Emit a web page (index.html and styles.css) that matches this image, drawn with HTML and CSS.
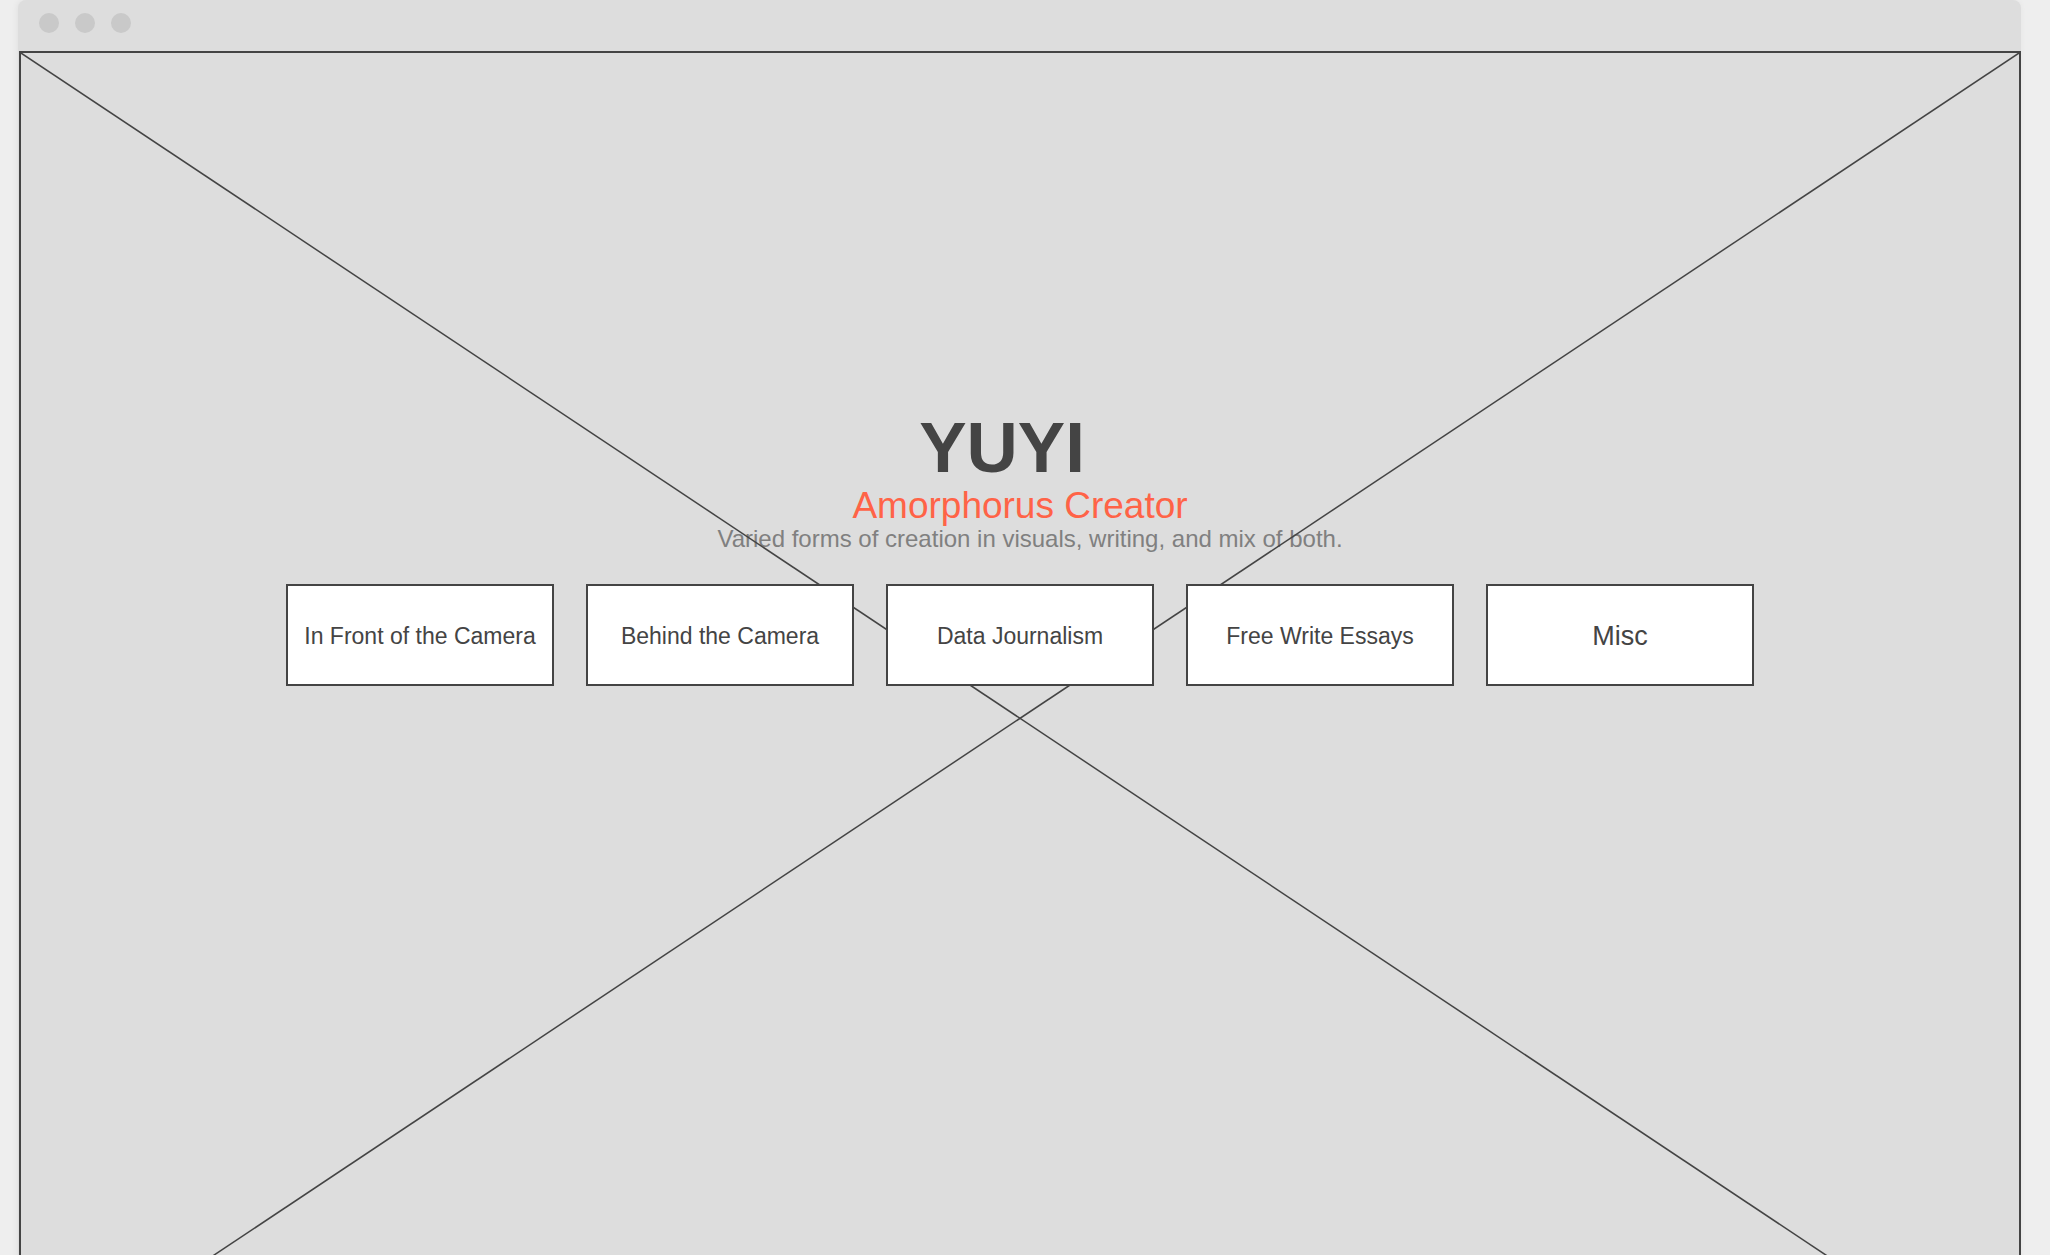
FILE: index.html
```html
<!DOCTYPE html>
<html lang="en">
<head>
<meta charset="utf-8">
<meta name="viewport" content="width=device-width, initial-scale=1">
<title>YUYI</title>
<link rel="stylesheet" href="styles.css">
</head>
<body>
<div class="window">
  <header class="titlebar">
    <span class="dot"></span>
    <span class="dot"></span>
    <span class="dot"></span>
  </header>
  <main class="hero">
    <svg class="cross" preserveAspectRatio="none" aria-hidden="true">
      <line x1="0" y1="0" x2="100%" y2="100%"></line>
      <line x1="100%" y1="0" x2="0" y2="100%"></line>
    </svg>
    <h1 class="name">YUYI</h1>
    <p class="role">Amorphorus Creator</p>
    <p class="tagline">Varied forms of creation in visuals, writing, and mix of both.</p>
    <nav class="sections">
      <button type="button" class="section">In Front of the Camera</button>
      <button type="button" class="section">Behind the Camera</button>
      <button type="button" class="section">Data Journalism</button>
      <button type="button" class="section">Free Write Essays</button>
      <button type="button" class="section section-large">Misc</button>
    </nav>
  </main>
</div>
</body>
</html>
```

FILE: styles.css
```css
* {
  box-sizing: border-box;
}

body {
  margin: 0;
  height: 100vh;
  overflow: hidden;
  background: #eee;
  color: #444;
  font-family: "Liberation Sans", Arial, sans-serif;
}

.window {
  margin: 0 29px 0 18px;
  padding-left: 1px;
  border-radius: 8px 8px 0 0;
  background: #ddd;
  box-shadow: -1px 0 6px rgba(0, 0, 0, 0.06);
}

.titlebar {
  display: flex;
  align-items: center;
  gap: 16px;
  padding: 13px 20px 18px;
}

.dot {
  width: 20px;
  height: 20px;
  border-radius: 50%;
  background: #c9c9c9;
}

.hero {
  position: relative;
  display: flex;
  flex-direction: column;
  align-items: center;
  aspect-ratio: 3 / 2;
  padding-top: 355px;
  border: 2px solid #444;
}

.cross {
  position: absolute;
  inset: 0;
  width: 100%;
  height: 100%;
  stroke: #444;
  stroke-width: 1.5;
}

.name,
.role,
.tagline {
  margin: 0;
  font-weight: normal;
}

.name {
  padding-right: 36px;
  font-size: 71px;
  font-weight: bold;
  line-height: 80px;
}

.role {
  color: #ff6347;
  font-size: 37px;
  line-height: 36px;
}

.tagline {
  padding-left: 20px;
  color: #808080;
  font-size: 24px;
  line-height: 30px;
}

.sections {
  position: relative;
  display: flex;
  gap: 32px;
  margin-top: 30px;
}

.section {
  width: 268px;
  height: 102px;
  padding: 3px 0 0;
  border: 2px solid #444;
  background: #fff;
  color: #444;
  font-family: inherit;
  font-size: 23px;
  white-space: nowrap;
}

.section-large {
  font-size: 27px;
}
```
